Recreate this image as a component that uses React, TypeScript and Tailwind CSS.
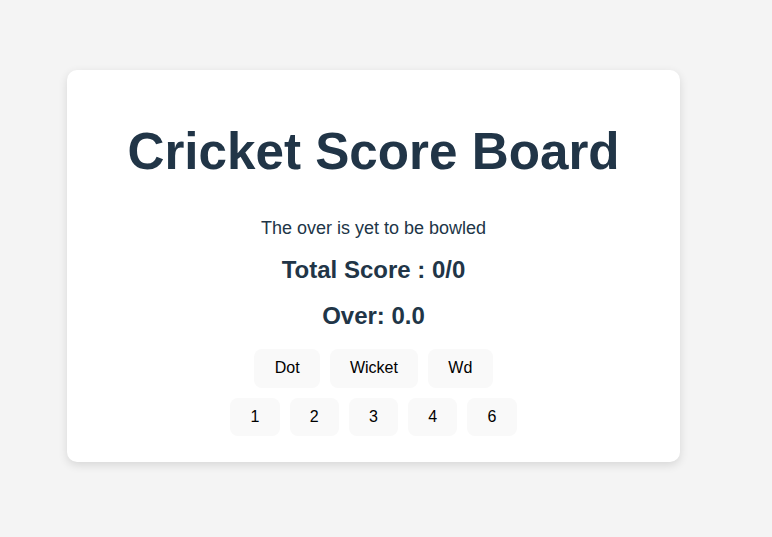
import React from "react";

export default function App() {
  const top = ["Dot", "Wicket", "Wd"];
  const nums = ["1", "2", "3", "4", "6"];
  const btn =
    "h-[38.6px] px-[19.2px] border border-transparent rounded-[8px] bg-[#f9f9f9] text-[16px] text-black flex items-center justify-center leading-[18px]";
  return (
    <div
      className="min-h-[537px] w-full bg-[#f4f4f4] pt-[70px] pl-[67px]"
      style={{ fontFamily: '"Liberation Sans", Arial, sans-serif' }}
    >
      <div className="w-[613px] h-[392px] bg-white rounded-[10px] shadow-[0_3px_10px_rgba(0,0,0,0.12)] pt-[54px] flex flex-col items-center text-[#213547]">
        <h1 className="text-[51.2px] font-bold leading-[56px]">Cricket Score Board</h1>
        <p className="mt-[35px] text-[18px] leading-[27px]">The over is yet to be bowled</p>
        <h2 className="mt-[14px] text-[24px] font-bold leading-[28px]">Total Score : 0/0</h2>
        <h2 className="mt-[18px] text-[24px] font-bold leading-[28px]">Over: 0.0</h2>
        <div className="mt-[19px] flex gap-[10px]">
          {top.map((t) => (
            <button key={t} className={btn}>
              {t}
            </button>
          ))}
        </div>
        <div className="mt-[10px] flex gap-[10px]">
          {nums.map((t) => (
            <button key={t} className={btn}>
              {t}
            </button>
          ))}
        </div>
      </div>
    </div>
  );
}
